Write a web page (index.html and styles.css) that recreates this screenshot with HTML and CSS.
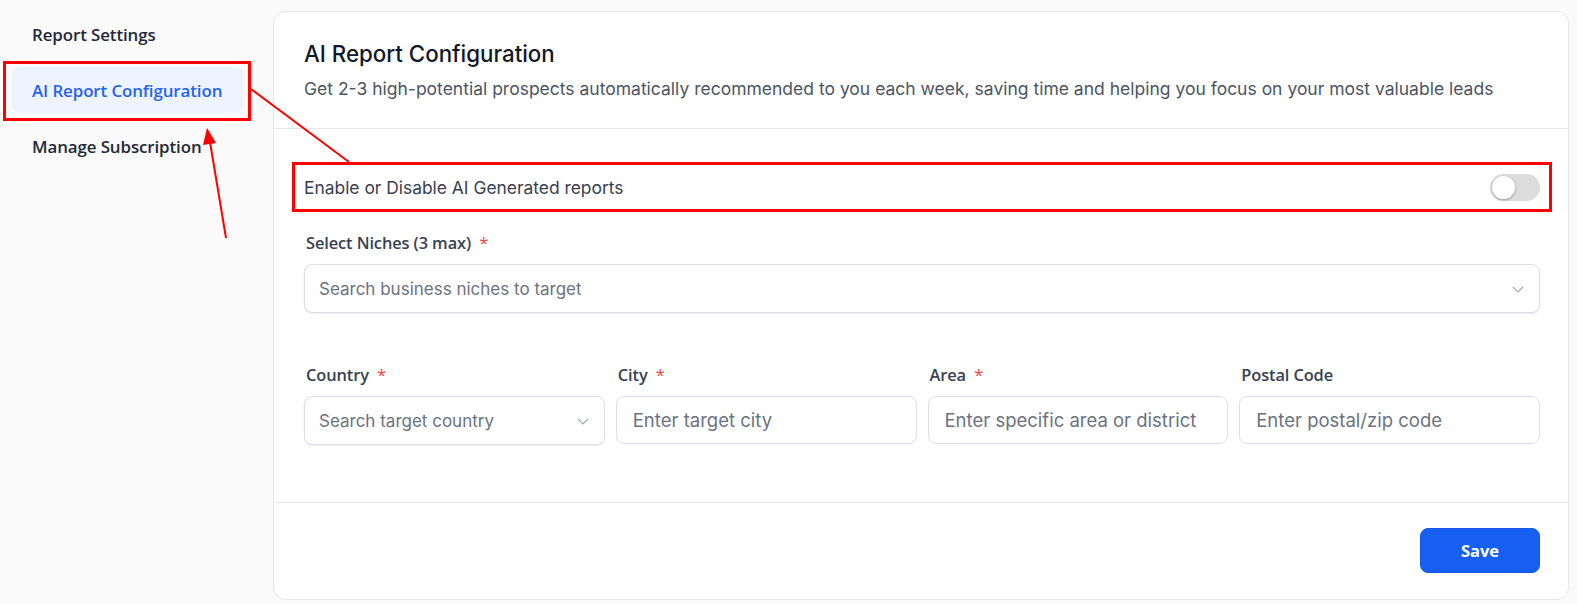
FILE: index.html
```html
<!DOCTYPE html>
<html lang="en">
<head>
    <meta charset="UTF-8">
    <meta name="viewport" content="width=device-width, initial-scale=1.0">
    <title>AI Report Configuration</title>
    <link rel="stylesheet" href="styles.css">
</head>
<body>
    <div class="layout">
        <nav class="sidebar">
            <div class="nav-item">Report Settings</div>
            <div class="nav-item active">AI Report Configuration</div>
            <div class="nav-item">Manage Subscription</div>
        </nav>

        <div class="card">
            <div class="card-header">
                <h2>AI Report Configuration</h2>
                <p>Get 2-3 high-potential prospects automatically recommended to you each week, saving time and helping you focus on your most valuable leads</p>
            </div>

            <div class="card-body">
                <div class="toggle-row">
                    <span>Enable or Disable AI Generated reports</span>
                    <div class="switch"><div class="knob"></div></div>
                </div>

                <div class="field">
                    <label>Select Niches (3 max) <span class="req">*</span></label>
                    <div class="select">
                        <span class="placeholder">Search business niches to target</span>
                        <svg class="chevron" width="14" height="14" viewBox="0 0 14 14"><path d="M2 5l5 5 5-5" fill="none" stroke="#a3a8b1" stroke-width="1.2"/></svg>
                    </div>
                </div>

                <div class="location-grid">
                    <div class="field">
                        <label>Country <span class="req">*</span></label>
                        <div class="select">
                            <span class="placeholder">Search target country</span>
                            <svg class="chevron" width="14" height="14" viewBox="0 0 14 14"><path d="M2 5l5 5 5-5" fill="none" stroke="#a3a8b1" stroke-width="1.2"/></svg>
                        </div>
                    </div>
                    <div class="field">
                        <label>City <span class="req">*</span></label>
                        <div class="input"><span class="placeholder">Enter target city</span></div>
                    </div>
                    <div class="field">
                        <label>Area <span class="req">*</span></label>
                        <div class="input"><span class="placeholder">Enter specific area or district</span></div>
                    </div>
                    <div class="field">
                        <label>Postal Code</label>
                        <div class="input"><span class="placeholder">Enter postal/zip code</span></div>
                    </div>
                </div>
            </div>

            <div class="card-footer">
                <button class="save-btn">Save</button>
            </div>
        </div>
    </div>

    <!-- annotation overlay -->
    <svg class="annotations" width="1577" height="604" viewBox="0 0 1577 604">
        <rect x="4.5" y="62.5" width="245" height="57" fill="none" stroke="#ff0000" stroke-width="3"/>
        <rect x="293.5" y="163.5" width="1257" height="47" fill="none" stroke="#ff0000" stroke-width="3"/>
        <line x1="251" y1="89" x2="349" y2="162" stroke="#ff0000" stroke-width="2"/>
        <line x1="226" y1="238" x2="210" y2="142" stroke="#ff0000" stroke-width="2"/>
        <polygon points="207,128 203,145 216,143" fill="#ff0000"/>
    </svg>
</body>
</html>
```

FILE: styles.css
```css
* {
    margin: 0;
    padding: 0;
    box-sizing: border-box;
}

body {
    font-family: 'Inter', 'Noto Sans', sans-serif;
    background: #fafafa;
    height: 604px;
    overflow: hidden;
}

.layout {
    display: flex;
    padding: 11px 8px 5px 12px;
    gap: 30px;
}

.sidebar {
    width: 231px;
    display: flex;
    flex-direction: column;
    gap: 10px;
    flex-shrink: 0;
}

.nav-item {
    height: 46px;
    display: flex;
    align-items: center;
    padding-left: 20px;
    border-radius: 8px;
    font-family: 'Open Sans', sans-serif;
    font-weight: 600;
    font-size: 16.9px;
    color: #1f2937;
    letter-spacing: -0.1px;
}

.nav-item.active {
    background: #eef4ff;
    color: #2563eb;
}

.card {
    flex: 1;
    background: white;
    border: 1px solid #e5e7eb;
    border-radius: 12px;
    height: 589px;
    display: flex;
    flex-direction: column;
}

.card-header {
    padding: 27px 30px 27px;
    border-bottom: 1px solid #e5e7eb;
}

.card-header h2 {
    font-size: 22.3px;
    font-weight: 500;
    line-height: 30px;
    color: #111827;
    margin-bottom: 7px;
}

.card-header p {
    font-size: 17.5px;
    line-height: 25px;
    color: #4b5563;
}

.card-body {
    flex: 1;
    padding: 35px 28px 0 30px;
}

.toggle-row {
    height: 46px;
    display: flex;
    justify-content: space-between;
    align-items: center;
    font-size: 17.4px;
    color: #374151;
}

.switch {
    width: 50px;
    height: 27px;
    border-radius: 14px;
    background: #dcdcdc;
    padding: 2px;
}

.knob {
    width: 23px;
    height: 23px;
    border-radius: 50%;
    background: white;
    box-shadow: 0 1px 3px rgba(0, 0, 0, 0.3);
}

.field label {
    display: block;
    font-family: 'Open Sans', sans-serif;
    font-weight: 600;
    font-size: 16.4px;
    line-height: 22px;
    color: #374151;
    letter-spacing: -0.1px;
    margin-bottom: 10px;
    padding-left: 2px;
}

.req {
    color: #ef4444;
    font-weight: 400;
    margin-left: 4px;
}

.card-body > .field {
    margin-top: 22px;
}

.select,
.input {
    height: 49px;
    border: 1px solid #dcdfe5;
    border-radius: 8px;
    display: flex;
    align-items: center;
    justify-content: space-between;
    padding: 0 14px;
    background: white;
}

.select {
    box-shadow: 0 1px 2px rgba(0, 0, 0, 0.08);
}

.input {
    height: 48px;
    padding-left: 16px;
}

.placeholder {
    font-size: 17px;
    color: #6b7280;
    white-space: nowrap;
}

.input .placeholder {
    font-size: 18.5px;
}

.location-grid {
    display: grid;
    grid-template-columns: repeat(4, 1fr);
    gap: 11px;
    margin-top: 51px;
}

.card-footer {
    border-top: 1px solid #e5e7eb;
    padding: 25px 28px 26px;
    display: flex;
    justify-content: flex-end;
}

.save-btn {
    width: 120px;
    height: 45px;
    border: 1px solid #1557e6;
    border-radius: 8px;
    background: #175ff0;
    color: white;
    font-family: 'Open Sans', sans-serif;
    font-weight: 700;
    font-size: 16.5px;
}

.annotations {
    position: absolute;
    left: 0;
    top: 0;
    pointer-events: none;
}
```
